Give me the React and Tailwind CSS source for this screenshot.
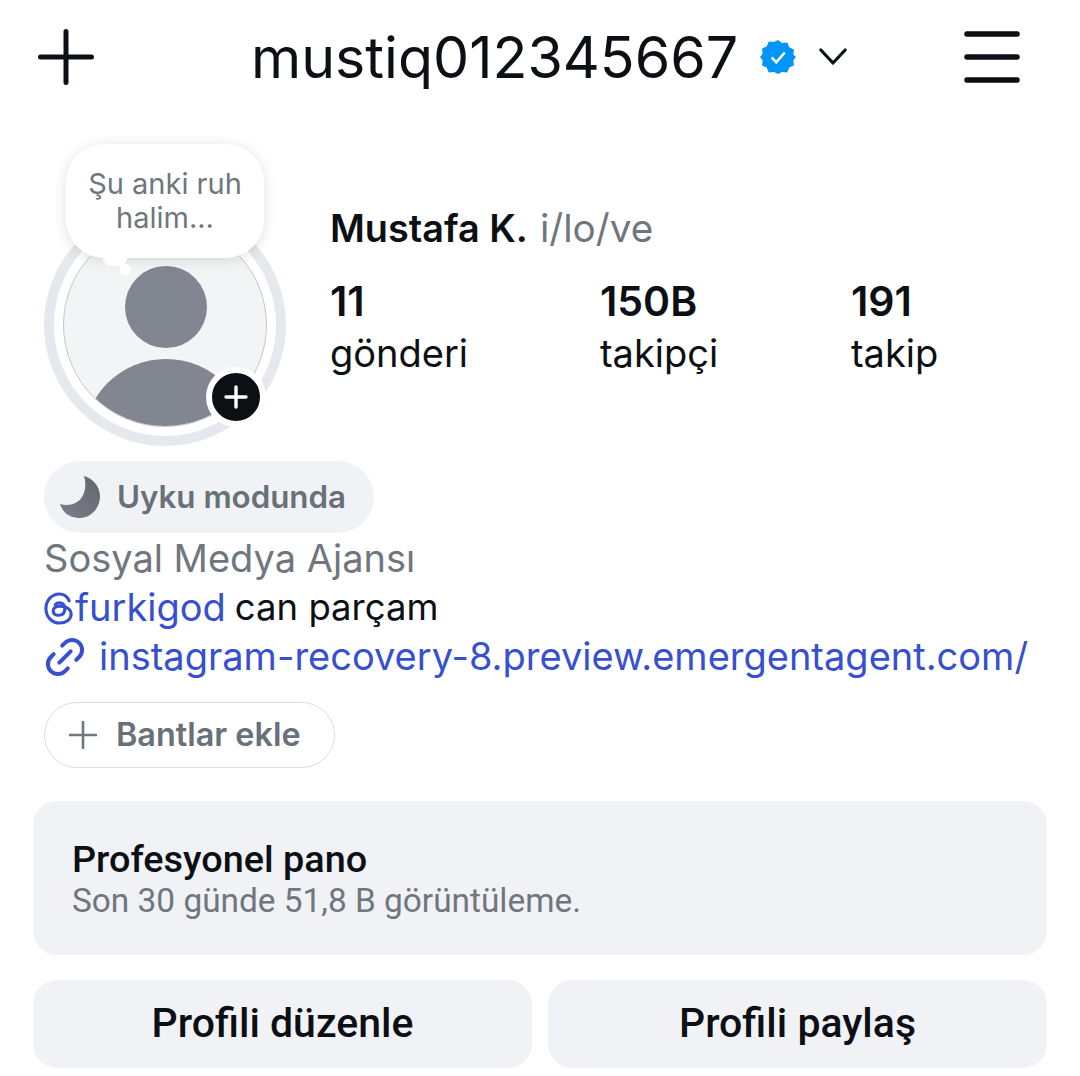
import React from 'react';
import { Link2 } from 'lucide-react';

function Stat({ value, label, className }) {
    return (
        <div className={className}>
            <p className="text-[41px] leading-[46px] font-semibold text-[#0c1014]">{value}</p>
            <p className="text-[38px] leading-[50px] mt-[4px] text-[#0c1014]">{label}</p>
        </div>
    );
}

function Avatar() {
    return (
        <div className="relative w-[242px] h-[242px] rounded-full border-[10px] border-[#e5e8ed] flex items-center justify-center">
            <div className="w-[204px] h-[204px] rounded-full overflow-hidden border border-[#c4c6ca] bg-[#f3f4f6]">
                <svg viewBox="0 0 204 204" width="204" height="204" className="block">
                    <circle cx="102" cy="83" r="41" fill="#828690" />
                    <circle cx="102" cy="218" r="83" fill="#828690" />
                </svg>
            </div>
            {/* baloncuk */}
            <div className="absolute left-[12px] top-[-70px] w-[198px] h-[114px] rounded-[38px] bg-white shadow-[0_2px_14px_rgba(0,0,0,0.13)] flex items-center justify-center text-center text-[29px] leading-[34px] text-[#6f767e]">
                Şu anki ruh<br />halim...
            </div>
            <div className="absolute left-[49px] top-[36px] w-[24px] h-[16px] rounded-full bg-white" />
            <div className="absolute left-[66px] top-[50px] w-[11px] h-[11px] rounded-full bg-white" />
            {/* arti rozeti */}
            <div className="absolute left-[152px] top-[153px] w-[60px] h-[60px] rounded-full border-[6px] border-white bg-[#0c1014] flex items-center justify-center">
                <svg viewBox="0 0 24 24" width="24" height="24" fill="none" stroke="#fff" strokeWidth="3.4" strokeLinecap="round">
                    <path d="M12 2v20M2 12h20" />
                </svg>
            </div>
        </div>
    );
}

export default function App() {
    return (
        <div className="w-[1080px] h-[1076px] overflow-hidden bg-white font-['Inter',sans-serif]">
            <header className="h-[144px] pl-[38px] pr-[60px] pb-[31px] flex items-center">
                <svg viewBox="0 0 56 56" width="56" height="56" fill="none" stroke="#0c1014" strokeWidth="5" strokeLinecap="round">
                    <path d="M28 2.5v51M2.5 28h51" />
                </svg>
                <div className="flex items-center ml-[157px]">
                    <span className="text-[57.300px] leading-[64px] text-[#0c1014]">mustiq012345667</span>
                    <svg viewBox="0 0 40 40" width="36" height="36" className="ml-[22px]">
                        <path fill="#0095f6" d="M20 1l4.6 3.4 5.7-.5 2.2 5.300 5.200 2.400-.6 5.700L40 20l-2.900 3.700.6 5.700-5.200 2.400-2.200 5.300-5.700-.5L20 39l-4.600-2.400-5.700.5-2.200-5.300-5.200-2.400.6-5.700L0 20l2.900-3.700-.6-5.700 5.200-2.400 2.200-5.300 5.700.5z" />
                        <path d="M13 20.500l5 5.500 9.500-11" fill="none" stroke="#fff" strokeWidth="2.800" />
                    </svg>
                    <svg viewBox="0 0 30 20" width="28" height="19" fill="none" stroke="#0c1014" strokeWidth="3.400" strokeLinecap="round" strokeLinejoin="round" className="ml-[23px]">
                        <path d="M2 3l13 14L28 3" />
                    </svg>
                </div>
                <svg viewBox="0 0 56 52" width="56" height="52" fill="none" stroke="#0c1014" strokeWidth="5.500" strokeLinecap="round" className="ml-auto">
                    <path d="M3 3h50M3 26h50M3 49h50" />
                </svg>
            </header>

            <section className="pl-[44px] flex">
                <div className="mt-[60px]">
                    <Avatar />
                </div>
                <div className="ml-[45px] pt-[60px]">
                    <p className="text-[37.800px] leading-[48px] ml-[-1px]">
                        <span className="font-semibold text-[#0c1014]">Mustafa K.</span>
                        <span className="text-[#6f767e] text-[38.700px] ml-[12px]">i/lo/ve</span>
                    </p>
                    <div className="flex mt-[26px] ml-[-1px]">
                        <Stat value="11" label="gönderi" className="w-[270px]" />
                        <Stat value="150B" label="takipçi" className="w-[251px]" />
                        <Stat value="191" label="takip" />
                    </div>
                </div>
            </section>

            <section className="pl-[44px] mt-[15px]">
                <div className="w-[330px] h-[72px] rounded-full bg-[#f0f2f5] flex items-center pl-[14px]">
                    <svg viewBox="0 0 44 44" width="44" height="44">
                        <defs>
                            <linearGradient id="moon" x1="0" y1="1" x2="1" y2="0">
                                <stop offset="0" stopColor="#7a808a" />
                                <stop offset="1" stopColor="#5f666f" />
                            </linearGradient>
                        </defs>
                        <path fill="url(#moon)" d="M26 1c9 2.500 16 10.500 16 20.500C42 33 33 43 21.500 43 12 43 4.500 37.500 2 29c9 2.500 16.500 0 21-5.500C27.500 17.500 28.500 9 26 1z" />
                    </svg>
                    <span className="ml-[15px] text-[31.300px] font-semibold text-[#687078]">Uyku modunda</span>
                </div>

                <div className="mt-[1px] text-[38px] leading-[49px]">
                    <p className="text-[#6f767e]">Sosyal Medya Ajansı</p>
                    <p className="flex items-center">
                        <svg viewBox="0 0 32 34" width="31" height="33" fill="none" stroke="#3650cf" strokeWidth="3.200" strokeLinecap="round" className="shrink-0 mt-[2px]">
                            <path d="M26 9C24 4.500 20.500 2 16 2 8 2 2 8.500 2 17s6 15 14 15c6.500 0 12-3.500 12-9 0-5-4.500-8.500-11-8.500-4.500 0-7.500 2-7.500 5s2.500 4.500 5.500 4.500c4 0 6.500-2.500 6.500-7 0-3.500-2-6-5.500-6-2 0-3.500.8-4.500 2" />
                        </svg>
                        <span className="text-[#3650cf]">furkigod</span>
                        <span className="ml-[9px] text-[36.500px] text-[#0c1014]">can parçam</span>
                    </p>
                    <p className="flex items-center whitespace-nowrap">
                        <Link2 size={48} strokeWidth={2} color="#3650cf" className="shrink-0 ml-[-3px] -rotate-45" />
                        <span className="ml-[10px] text-[#3650cf]">instagram-recovery-8.preview.emergentagent.com/</span>
                    </p>
                </div>

                <div className="mt-[21px] w-[291px] h-[66px] rounded-full border border-[#dadde1] flex items-center pl-[24px]">
                    <svg viewBox="0 0 28 28" width="28" height="28" fill="none" stroke="#6f767e" strokeWidth="2.600" strokeLinecap="round">
                        <path d="M14 1v26M1 14h26" />
                    </svg>
                    <span className="ml-[19px] text-[32.400px] font-semibold text-[#687078]">Bantlar ekle</span>
                </div>
            </section>

            <section className="mx-[33px] mt-[33px] flex flex-col gap-[25px] font-['Roboto',sans-serif]">
                <div className="h-[154px] rounded-[24px] bg-[#f0f2f5] pl-[39px] pt-[36px]">
                    <p className="text-[37.800px] leading-[44px] font-medium text-[#0c1014]">Profesyonel pano</p>
                    <p className="text-[33.400px] leading-[40px] text-[#6f767e]">Son 30 günde 51,8 B görüntüleme.</p>
                </div>
                <div className="flex gap-[16px]">
                    <button className="flex-1 h-[88px] rounded-[24px] bg-[#f0f2f5] text-[41px] font-medium text-[#0c1014]">Profili düzenle</button>
                    <button className="flex-1 h-[88px] rounded-[24px] bg-[#f0f2f5] text-[41px] font-medium text-[#0c1014]">Profili paylaş</button>
                </div>
            </section>
        </div>
    );
}
